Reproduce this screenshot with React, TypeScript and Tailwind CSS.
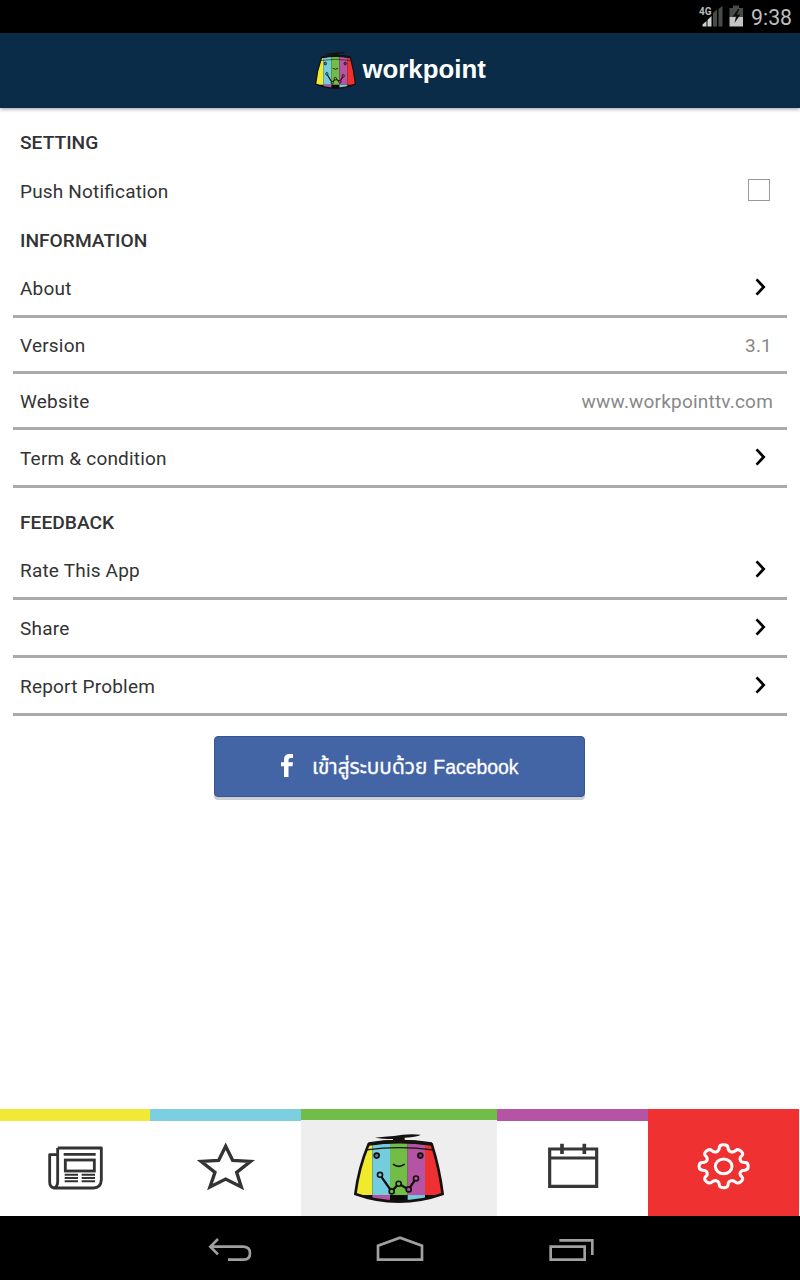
import React from "react";

const gearPath = (() => {
  const pts: [number, number][] = [];
  for (let i = 0; i < 8; i++) {
    const spec: [number, number][] = [[-10, 1.04], [10, 1.04], [14, 0.76], [31, 0.76]];
    for (const [offset, r] of spec) {
      const a = ((i * 45 + offset) * Math.PI) / 180;
      pts.push([686 + 72 * r * Math.cos(a), 199 + 63 * r * Math.sin(a)]);
    }
  }
  const mid = (p: [number, number], q: [number, number]) =>
    `${((p[0] + q[0]) / 2).toFixed(1)} ${((p[1] + q[1]) / 2).toFixed(1)}`;
  let d = `M${mid(pts[pts.length - 1], pts[0])}`;
  pts.forEach((p, i) => {
    d += `Q${p[0].toFixed(1)} ${p[1].toFixed(1)} ${mid(p, pts[(i + 1) % pts.length])}`;
  });
  return d + "Z";
})();

function Mascot({ className, id }: { className: string; id: string }) {
  const body = "M72 58Q162 42 261 58Q284 130 294 209Q230 232 162 232Q95 232 32 209Q42 130 72 58Z";
  return (
    <svg className={className} viewBox="28 28 270 208" preserveAspectRatio="none">
      <clipPath id={id}>
        <path d={body} />
      </clipPath>
      <g clipPath={`url(#${id})`}>
        <rect x="20" y="40" width="290" height="200" fill="#0b0908" />
        <rect x="20" y="40" width="63" height="172" fill="#f0ea2c" />
        <rect x="83" y="40" width="53" height="172" fill="#74cddd" />
        <rect x="136" y="40" width="53" height="172" fill="#72bd47" />
        <rect x="189" y="40" width="52" height="172" fill="#b554a4" />
        <rect x="241" y="40" width="60" height="172" fill="#ef3030" />
        <rect x="83" y="212" width="53" height="24" fill="#b554a4" />
        <rect x="189" y="212" width="52" height="24" fill="#74cddd" />
      </g>
      <g fill="none" stroke="#15110f" strokeLinejoin="round">
        <path d={body} strokeWidth="8" />
        <path d="M72 58Q162 44 261 58" strokeWidth="11" />
        <path d="M66 76Q162 62 264 76" strokeWidth="3.5" />
        <path d="M145 119Q162 132 180 119" strokeWidth="5" />
        <path d="M106 151L141 201L162 178L192 195L214 162" strokeWidth="7" />
      </g>
      <path d="M91 39Q135 34 148 34Q185 27 228 30Q222 36 180 39V51H145V43Q112 43 91 39Z" fill="#15110f" />
      <g stroke="#15110f" strokeWidth="5">
        <circle cx="96" cy="93" r="7.5" fill="#4b8790" />
        <circle cx="227" cy="93" r="7.5" fill="#713866" />
        <circle cx="106" cy="151" r="7.5" fill="#74cddd" />
        <circle cx="141" cy="201" r="7.5" fill="#72bd47" />
        <circle cx="162" cy="178" r="7.5" fill="#72bd47" />
        <circle cx="192" cy="195" r="7.5" fill="#b554a4" />
        <circle cx="214" cy="162" r="7.5" fill="#b554a4" />
      </g>
    </svg>
  );
}

function Heading({ children, className }: { children: string; className: string }) {
  return (
    <h2 className={`flex items-center pl-5 text-[19.2px] leading-none font-medium ${className}`}>
      {children}
    </h2>
  );
}

function Chevron() {
  return (
    <svg className="mr-[8px] mb-[4px] h-[18px] w-[11px]" viewBox="0 0 11 18" fill="none" stroke="#000" strokeWidth="2.7">
      <path d="M1.5 1.4L8.700 9L1.500 16.600" />
    </svg>
  );
}

function Row({ label, value, className }: { label: string; value?: React.ReactNode; className: string }) {
  return (
    <div className={`mx-[13px] flex items-center justify-between border-b-[3px] border-[#aaa] pr-[13px] pl-[7px] ${className}`}>
      <span className="text-[19px] leading-none tracking-[0.2px]">{label}</span>
      {value ?? <Chevron />}
    </div>
  );
}

export default function App() {
  return (
    <div className="flex h-[1280px] w-[800px] flex-col overflow-hidden bg-white font-['Roboto',sans-serif] text-[#333]">
      <div className="flex h-[33px] shrink-0 items-start justify-end bg-black pt-[4px] pr-[8px]">
        <svg className="mr-[6px] h-[24px] w-[48px]" viewBox="0 0 48 24">
          <path d="M5.500 22.500V20.500L9.500 17V22.500ZM10.500 22.500V16L14.500 12V22.500Z" fill="#d0d0d0" />
          <path d="M16 22.500V9L20 5.500V22.500ZM21.500 22.500V5L25.500 2V22.500Z" fill="#484c48" />
          <text x="2" y="10.500" fontSize="11.500" fontWeight="700" fill="#bbb" stroke="#000" strokeWidth="2" paintOrder="stroke" textLength="12.500" lengthAdjust="spacingAndGlyphs" fontFamily="Roboto">4G</text>
          <path d="M32.500 4H36V1.500H42V4H46V13H32.500Z" fill="#484c48" />
          <path d="M32.500 13H46V22.500H32.500Z" fill="#c4c4c4" />
          <path d="M41 5L35.500 12.500H39L37.500 19L43.500 10.500H40L42.500 5Z" fill="#111" />
        </svg>
        <span className="w-[41px] pt-[3px] text-[21.300px] leading-none whitespace-nowrap text-[#bebebe]">9:38</span>
      </div>

      <header className="z-10 flex h-[75px] shrink-0 items-start bg-[#0a2c49] pt-[19px] pl-[315px] shadow-[0_1px_4px_rgba(0,0,0,0.4)]">
        <Mascot className="h-[37px] w-[41px]" id="brand-body" />
        <span className="ml-[6.500px] pt-[3px] font-['Liberation_Sans',sans-serif] text-[25.800px] leading-[28px] font-bold text-white">workpoint</span>
      </header>

      <main className="flex flex-1 flex-col pt-[10px]">
        <Heading className="h-[49px]">SETTING</Heading>
        <div className="flex h-[49px] items-center justify-between pr-[30px] pl-5">
          <span className="text-[19px] leading-none tracking-[0.18px] [font-feature-settings:'liga'_1]">Push Notification</span>
          <span className="mb-[3px] h-[22px] w-[22.500px] border border-[#999]" />
        </div>
        <Heading className="h-[49px]">INFORMATION</Heading>
        <Row label="About" className="h-[53px] pb-[3px]" />
        <Row label="Version" className="h-[56px] pt-[2px]" value={<span className="mr-[2px] text-[19px] leading-none tracking-[0.2px] text-[#888]">3.1</span>} />
        <Row label="Website" className="h-[56px] pt-[2px]" value={<span className="mr-[1px] text-[19px] leading-none tracking-[0.2px] text-[#888]">www.workpointtv.com</span>} />
        <Row label="Term &amp; condition" className="h-[58px] pt-[2px]" />
        <Heading className="h-[59px] pt-[10px]">FEEDBACK</Heading>
        <Row label="Rate This App" className="h-[53px] pb-[3px]" />
        <Row label="Share" className="h-[58px] pt-[2px]" />
        <Row label="Report Problem" className="h-[58px] pt-[2px]" />

        <button className="mt-[20px] ml-[214px] flex h-[61px] w-[371px] items-center rounded-[4px] border border-[#36568f] bg-[#4465a5] pl-[66px] text-white shadow-[0_3px_0_#cdced3]">
          <svg className="mb-[2px] h-[23px] w-[12px]" viewBox="0 0 12 23" fill="#fff">
            <path d="M3 23V12.300H0V8.300H3V5.500Q3 0 8.500 0H12V4H9.500Q7.500 4 7.500 6V8.300H12L11.500 12.300H7.500V23Z" />
          </svg>
          <span className="ml-[19px] flex items-baseline gap-[6px] pt-[2px] font-['Liberation_Sans','Noto_Sans_Thai',sans-serif] leading-none whitespace-nowrap [-webkit-text-stroke:0.3px_#fff]">
            <span className="text-[20.800px] leading-none">เข้าสู่ระบบด้วย</span>
            <span className="text-[19.400px] leading-none">Facebook</span>
          </span>
        </button>
      </main>

      <nav className="flex h-[107px] shrink-0 pr-px">
        <div className="flex w-[150px] items-start border-t-[12px] border-[#f0ea37] pt-[25px] pl-[48px]">
          <svg className="h-[45px] w-[56px]" viewBox="144 138 168 135" fill="none" stroke="#333" strokeWidth="6">
            <path d="M173 144H304V239Q303 264 280 264H162Q149 261 149 246V164H173M173 144V245Q173 260 162 264" strokeWidth="8.500" strokeLinejoin="round" />
            <path d="M191 163H287" strokeWidth="8" />
            <rect x="196" y="180" width="87" height="33" strokeWidth="8.500" />
            <path d="M194 224H234M194 234H234M194 244H234M245 224H285M245 234H285M245 244H285" />
          </svg>
        </div>
        <div className="flex w-[151px] items-start border-t-[12px] border-[#7bcfe0] pt-[21px] pl-[47px]">
          <svg className="h-[49px] w-[58px]" viewBox="591 126 174 147" fill="none" stroke="#333" strokeWidth="10">
            <path d="M677 139L656 181L603 184L645 217L630 261L677 237L724 261L710 217L752 184L698 181Z" />
          </svg>
        </div>
        <div className="flex w-[196px] items-start border-t-[11px] border-[#72bd47] bg-[#eee] pt-[14px] pl-[53px]">
          <Mascot className="h-[69px] w-[90px]" id="tab-body" />
        </div>
        <div className="flex w-[151px] items-start border-t-[12px] border-[#b554a4] pt-[22px] pl-[50px]">
          <svg className="h-[46px] w-[52px]" viewBox="156 129 156 138" fill="none" stroke="#373737" strokeWidth="9.500">
            <path d="M164 147H305V259H164ZM164 174H305" />
            <path d="M201 131V162M268 131V162" strokeWidth="11" />
          </svg>
        </div>
        <div className="flex w-[151px] items-start bg-[#ef3131] pt-[34px] pl-[49px]">
          <svg className="h-[47px] w-[53px]" viewBox="606 129 159 141" fill="none" stroke="#fff" strokeWidth="9">
            <path d={gearPath} />
            <ellipse cx="686" cy="199" rx="25" ry="22" />
          </svg>
        </div>
      </nav>

      <div className="flex h-[64px] shrink-0 items-end bg-black pb-[18px] pl-[208px]">
        <svg className="h-[24px] w-[44px]" viewBox="624 414 132 72" fill="none" stroke="#a0a0a0" strokeWidth="8">
          <path d="M654 417L631 440L654 463M632 440H731Q750 441 750 460Q750 479 731 479H684" />
        </svg>
        <svg className="ml-[124px] h-[27px] w-[48px]" viewBox="228 405 144 81" fill="none" stroke="#a0a0a0" strokeWidth="8">
          <path d="M234 479V437L300 413L366 437V479Z" />
        </svg>
        <svg className="ml-[125px] h-[24px] w-[46px]" viewBox="162 414 138 72" fill="none" stroke="#a0a0a0" strokeWidth="8">
          <path d="M167 440H269V479H167ZM193 421H292V465" />
        </svg>
      </div>
    </div>
  );
}
